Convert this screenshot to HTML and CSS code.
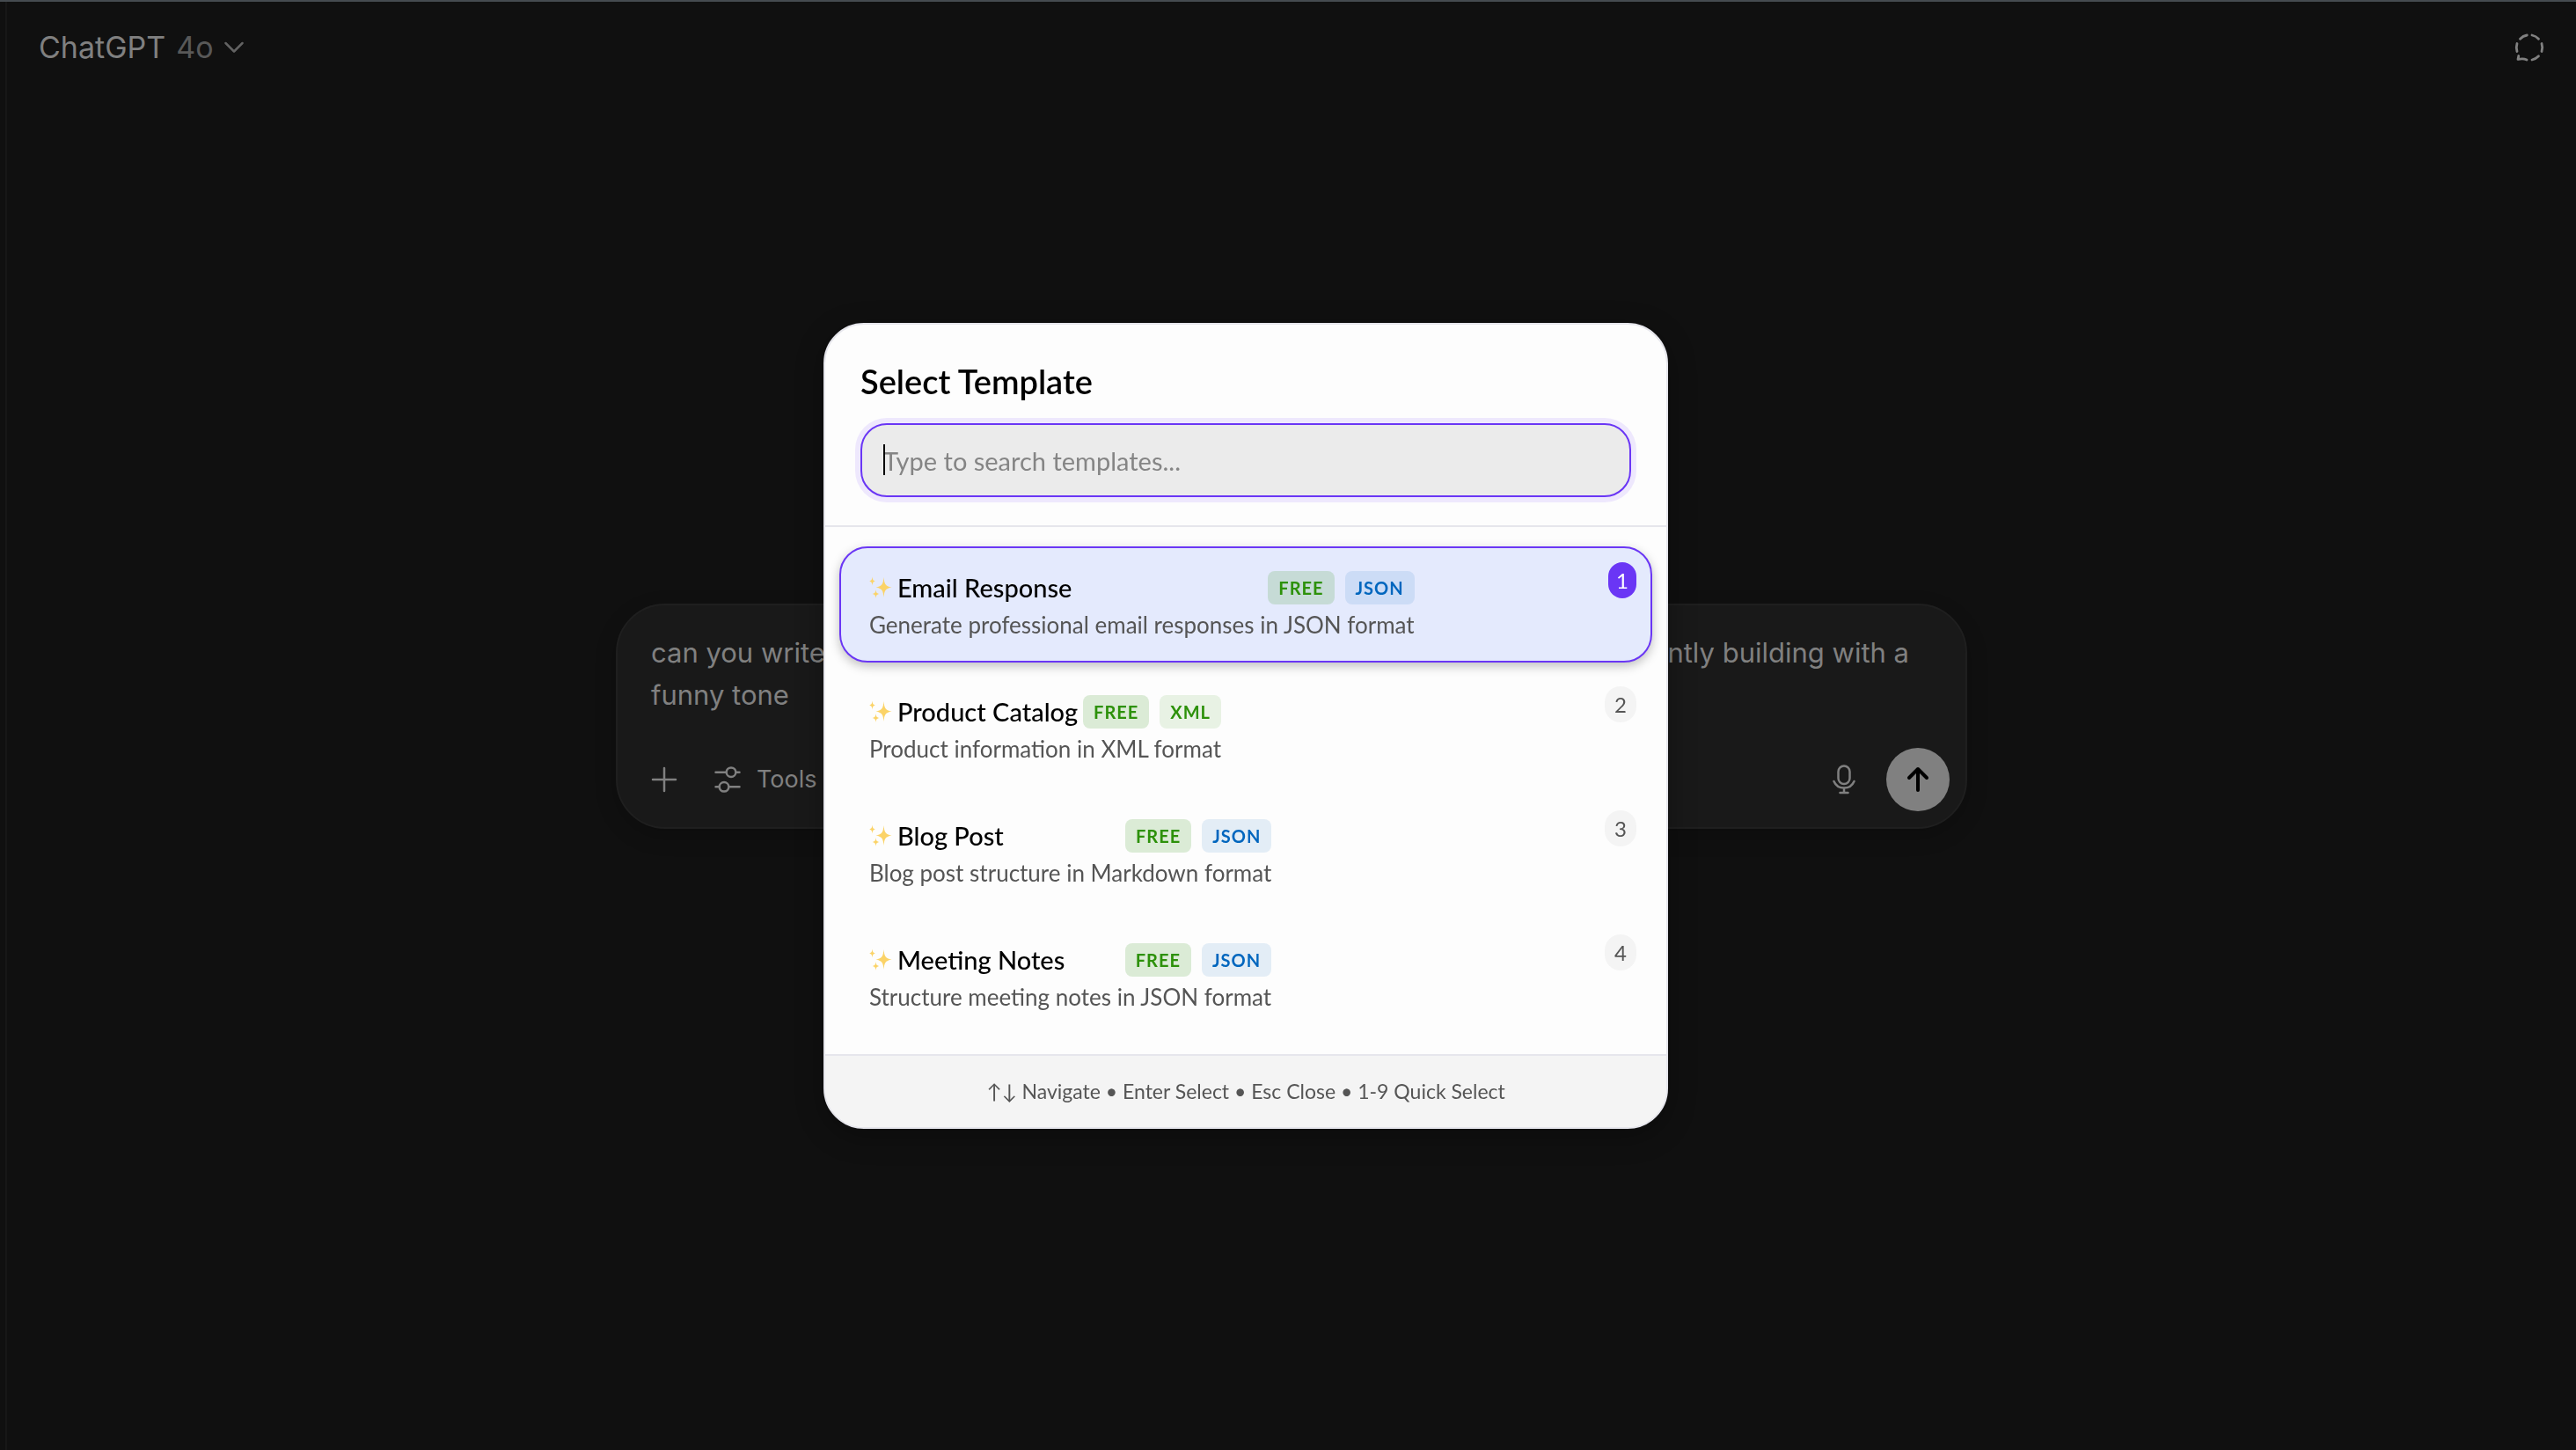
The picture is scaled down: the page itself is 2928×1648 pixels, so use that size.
FILE: index.html
```html
<!DOCTYPE html>
<html lang="en">
<head>
<meta charset="utf-8">
<title>ChatGPT</title>
<link rel="stylesheet" href="styles.css">
</head>
<body>
<svg class="defs" aria-hidden="true">
  <symbol id="sparkles" viewBox="0 0 26 26">
    <path d="M16.500 1C17.200 8.500 18 11 25.500 12.500C18 14 17.200 16.500 16.500 24C15.800 16.500 15 14 7.500 12.500C15 11 15.800 8.500 16.500 1Z"/>
    <path d="M3.500 0.500C3.900 3.800 4.200 4.600 7 5.500C4.200 6.400 3.900 7.200 3.500 10.500C3.100 7.200 2.800 6.400 0 5.500C2.800 4.600 3.100 3.800 3.500 0.500Z"/>
    <path d="M7.500 15C7.900 18.300 8.200 19.100 11.500 20C8.200 20.900 7.900 21.700 7.500 25C7.100 21.700 6.800 20.900 3.500 20C6.800 19.100 7.100 18.300 7.500 15Z"/>
  </symbol>
</svg>
<div class="app">
  <header class="topbar">
    <button class="model" type="button">
      <span>ChatGPT</span> <span class="model-version">4o</span>
      <svg class="chevron" width="22" height="14" viewBox="0 0 22 14" fill="none" stroke="currentColor" stroke-width="2.500" stroke-linecap="round" stroke-linejoin="round"><path d="M1.500 2L11 11.500L20.500 2"/></svg>
    </button>
    <button class="icon-button temp-chat" type="button" aria-label="Temporary chat">
      <svg width="34" height="34" viewBox="0 0 34 34" fill="none" stroke="currentColor" stroke-width="2.800" stroke-linecap="round" stroke-linejoin="round">
        <path d="M14.300 3A14.500 14.500 0 0 0 6.500 7.200M20 3A14.500 14.500 0 0 1 27.500 7.200M31 12.500A14.500 14.500 0 0 1 31 21.500M27.500 26.800A14.500 14.500 0 0 1 20 31M3 12.500A14.500 14.500 0 0 0 3 21.500M4.800 26.500L4 30.500C7.500 29.500 10 29 14 31"/>
      </svg>
    </button>
  </header>
  <main class="stage">
    <form class="composer">
      <div class="prompt" role="textbox" aria-label="Message">
        <div class="prompt-line"><span>can you write</span> <span>currently building with a</span></div>
        <div>funny tone</div>
      </div>
      <div class="actions">
        <button class="icon-button" type="button" aria-label="Add">
          <svg width="30" height="30" viewBox="0 0 30 30" fill="none" stroke="currentColor" stroke-width="2.500" stroke-linecap="round"><path d="M15 2V28M2 15H28"/></svg>
        </button>
        <button class="tools" type="button">
          <svg width="30" height="30" viewBox="0 0 30 30" fill="none" stroke="currentColor" stroke-width="2.500" stroke-linecap="round"><path d="M1.500 6.700H13.500M24.500 6.700H28.500M1.500 23.300H5.500M16.500 23.300H28.500"/><circle cx="19" cy="6.700" r="5.300"/><circle cx="11" cy="23.300" r="5.300"/></svg>
          <span>Tools</span>
        </button>
        <button class="icon-button mic" type="button" aria-label="Dictate">
          <svg width="26" height="34" viewBox="0 0 26 34" fill="none" stroke="currentColor" stroke-width="2.500" stroke-linecap="round"><rect x="6.500" y="1.500" width="13" height="20.500" rx="6.500"/><path d="M1.500 19A12.500 12.500 0 0 0 24.500 19M13 27V32M8.500 32H17.500"/></svg>
        </button>
        <button class="send" type="submit" aria-label="Send">
          <svg width="26" height="30" viewBox="0 0 26 30" fill="none" stroke="currentColor" stroke-width="4" stroke-linecap="round" stroke-linejoin="round"><path d="M13 27V3M3 13L13 3L23 13"/></svg>
        </button>
      </div>
    </form>
  </main>
</div>
<div class="overlay">
  <section class="dialog" role="dialog" aria-labelledby="dialog-title">
    <header class="dialog-head">
      <h1 class="dialog-title" id="dialog-title">Select Template</h1>
      <div class="search">
        <input class="search-input" type="text" placeholder="Type to search templates..." aria-label="Search templates">
        <span class="caret"></span>
      </div>
    </header>
    <div class="list">
      <button class="item selected" type="button">
        <span class="body">
          <span class="row"><span class="name"><svg class="spark" width="26" height="26"><use href="#sparkles"/></svg>Email Response</span><span class="tags"><span class="tag free">FREE</span><span class="tag json">JSON</span></span></span>
          <span class="desc">Generate professional email responses in JSON format</span>
        </span>
        <span class="key">1</span>
      </button>
      <button class="item" type="button">
        <span class="body">
          <span class="row"><span class="name"><svg class="spark" width="26" height="26"><use href="#sparkles"/></svg>Product Catalog</span><span class="tags"><span class="tag free">FREE</span><span class="tag xml">XML</span></span></span>
          <span class="desc">Product information in XML format</span>
        </span>
        <span class="key">2</span>
      </button>
      <button class="item" type="button">
        <span class="body">
          <span class="row"><span class="name"><svg class="spark" width="26" height="26"><use href="#sparkles"/></svg>Blog Post</span><span class="tags"><span class="tag free">FREE</span><span class="tag json">JSON</span></span></span>
          <span class="desc">Blog post structure in Markdown format</span>
        </span>
        <span class="key">3</span>
      </button>
      <button class="item" type="button">
        <span class="body">
          <span class="row"><span class="name"><svg class="spark" width="26" height="26"><use href="#sparkles"/></svg>Meeting Notes</span><span class="tags"><span class="tag free">FREE</span><span class="tag json">JSON</span></span></span>
          <span class="desc">Structure meeting notes in JSON format</span>
        </span>
        <span class="key">4</span>
      </button>
    </div>
    <footer class="dialog-foot">↑↓ Navigate • Enter Select • Esc Close • 1-9 Quick Select</footer>
  </section>
</div>
</body>
</html>
```
FILE: styles.css
```css
* {
  box-sizing: border-box;
}

body {
  margin: 0;
  border-top: 2px solid #454b50;
  background: #101010;
  color: #808080;
  font-family: Inter, "Liberation Sans", sans-serif;
}

button {
  margin: 0;
  padding: 0;
  border: 0;
  background: none;
  color: inherit;
  font: inherit;
}

svg {
  display: block;
  flex: none;
}

.defs {
  position: absolute;
  width: 0;
  height: 0;
}

.app {
  display: flex;
  flex-direction: column;
  min-height: calc(100vh - 2px);
  margin-left: 6px;
  border-left: 2px solid #171717;
}

.topbar {
  display: flex;
  align-items: center;
  justify-content: space-between;
  height: 104px;
  padding: 0 36px;
}

.model {
  display: flex;
  align-items: center;
  gap: 12px;
  font-size: 34px;
  line-height: 56px;
}

.model-version {
  color: #585858;
}

.chevron {
  color: #626262;
}

/* Prompt composer */
.stage {
  flex: 1;
  display: flex;
  align-items: center;
  justify-content: center;
  padding: 0 40px 126px;
}

.composer {
  width: 100%;
  max-width: 1536px;
  padding: 30px 18px 18px 38px;
  border: 2px solid #1f1f1f;
  border-radius: 56px;
  background: #191919;
  box-shadow: 0 8px 24px rgba(0, 0, 0, 0.2);
}

.prompt {
  padding-right: 46px;
  font-size: 31px;
  line-height: 48px;
}

.prompt-line {
  display: flex;
  justify-content: space-between;
}

.actions {
  display: flex;
  align-items: center;
  margin-top: 36px;
}

.tools {
  display: flex;
  align-items: center;
  gap: 18px;
  margin-left: 42px;
  font-size: 27px;
  line-height: 40px;
}

.mic {
  margin-left: auto;
}

.send {
  display: flex;
  align-items: center;
  justify-content: center;
  width: 72px;
  height: 72px;
  margin-left: 35px;
  border-radius: 50%;
  background: #808080;
  color: #000;
}

/* Template picker */
.overlay {
  position: fixed;
  inset: 2px 0 0;
  display: flex;
  align-items: center;
  justify-content: center;
  padding-right: 96px;
  font-family: Lato, "Liberation Sans", sans-serif;
}

.dialog {
  width: 100%;
  max-width: 960px;
  border: 2px solid #e6e6ec;
  border-radius: 46px;
  background: #fdfdfd;
  box-shadow: 0 8px 32px rgba(0, 0, 0, 0.3);
  overflow: hidden;
}

.dialog-head {
  padding: 40px 40px 32px;
  border-bottom: 2px solid #e6e6ec;
}

.dialog-title {
  margin: 0 0 24px;
  color: #000;
  font-size: 38px;
  font-weight: 600;
  line-height: 48px;
}

.search {
  position: relative;
}

.search-input {
  display: block;
  width: 100%;
  height: 84px;
  padding: 0 24px;
  border: 2px solid #6a36f5;
  border-radius: 30px;
  outline: 0;
  background: #ebebeb;
  box-shadow: 0 0 0 6px #eee8fd;
  color: #000;
  font: inherit;
  font-size: 29px;
}

.search-input::placeholder {
  color: #858585;
  opacity: 1;
}

.caret {
  position: absolute;
  top: 24px;
  left: 26px;
  width: 2px;
  height: 35px;
  background: #000;
}

.list {
  display: flex;
  flex-direction: column;
  gap: 9px;
  padding: 22px 16px;
}

.item {
  display: flex;
  align-items: flex-start;
  justify-content: space-between;
  padding: 16px;
  border: 2px solid transparent;
  border-radius: 32px;
  text-align: left;
}

.selected {
  border-color: #6a36f5;
  background: #e4eafd;
  box-shadow: 0 4px 12px rgba(0, 0, 0, 0.25);
}

.body {
  display: flex;
  flex-direction: column;
  gap: 4px;
  padding: 10px 0 6px 16px;
}

.row {
  display: flex;
  align-items: center;
  justify-content: space-between;
}

.name {
  display: flex;
  align-items: center;
  gap: 6px;
  color: #000;
  font-size: 29px;
  font-weight: 500;
  line-height: 38px;
}

.spark {
  fill: #fbd367;
}

.tags {
  display: flex;
  gap: 12px;
}

.tag {
  padding: 0 12px;
  border-radius: 8px;
  font-size: 20px;
  font-weight: 700;
  letter-spacing: 1px;
  line-height: 38px;
}

.free {
  background: rgba(45, 145, 10, 0.16);
  color: #2d910a;
}

.json {
  background: rgba(0, 102, 190, 0.1);
  color: #0066be;
}

.xml {
  background: rgba(45, 145, 10, 0.1);
  color: #2d910a;
}

.desc {
  color: #555;
  font-size: 26px;
  line-height: 38px;
}

.key {
  min-width: 36px;
  border-radius: 20px;
  background: #f4f4f4;
  color: #555;
  font-size: 24px;
  line-height: 41px;
  text-align: center;
}

.selected .key {
  min-width: 32px;
  background: #6a36f5;
  color: #fff;
}

.dialog-foot {
  padding: 24px;
  border-top: 2px solid #e6e6ec;
  background: #f4f4f4;
  color: #555;
  font-size: 23px;
  line-height: 33px;
  text-align: center;
}
```
